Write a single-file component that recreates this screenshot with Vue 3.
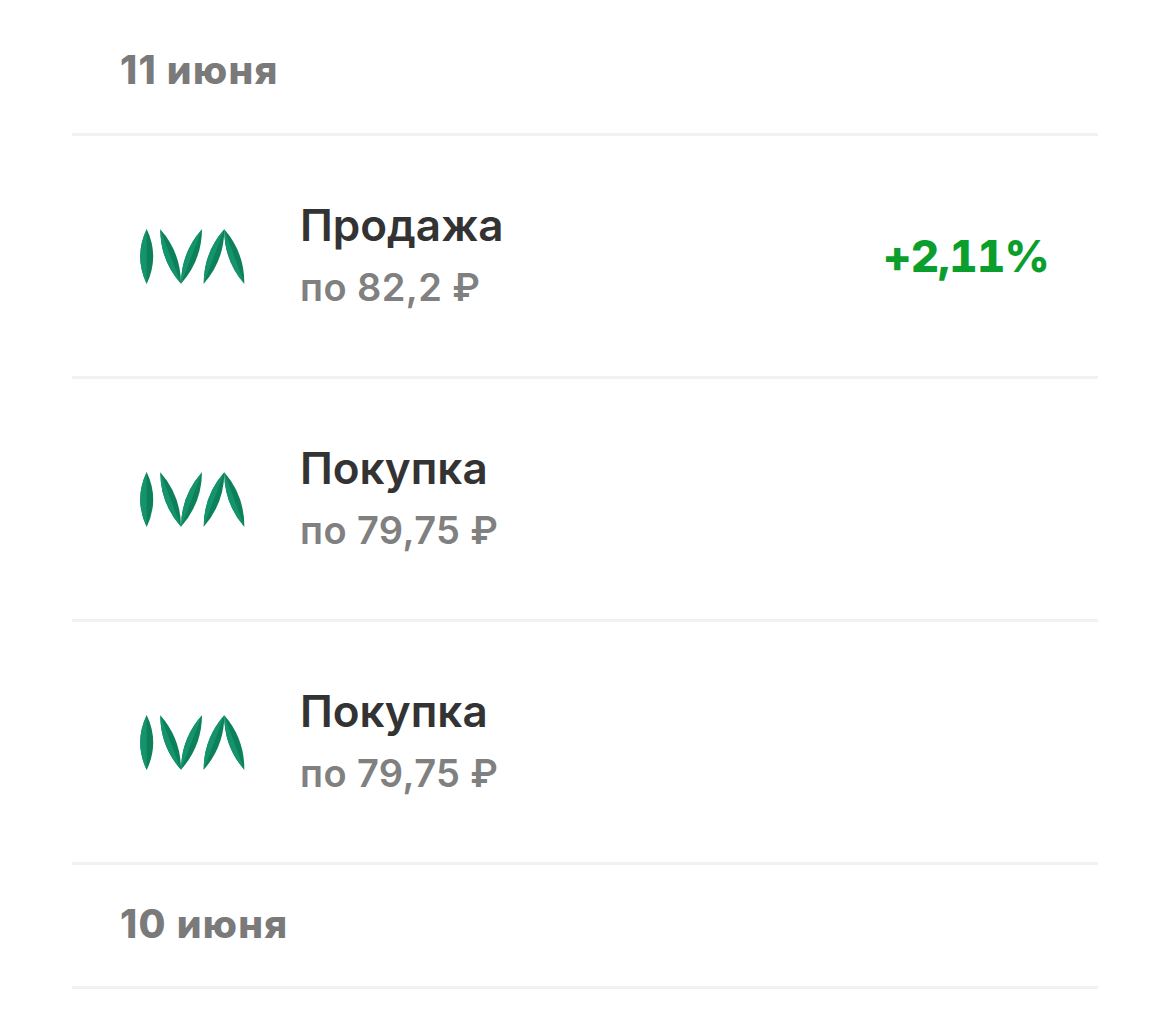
<template>
  <div class="page">
    <template v-for="group in groups" :key="group.date">
      <div class="date">{{ group.date }}</div>
      <div v-for="(deal, i) in group.deals" :key="i" class="deal">
        <svg class="logo" viewBox="0 0 108 58" width="108" height="58">
          <g fill="#0b8059">
            <path d="M8.700 2Q-4.300 29.500 8.700 57Q21.700 29.500 8.700 2Z" />
            <path d="M22.300 2.300Q22.300 33.400 43 56.700Q42.900 25.600 22.300 2.300Z" />
            <path d="M64 2.300Q43.200 25.600 43 56.700Q63.800 33.400 64 2.300Z" />
            <path d="M86.300 2.300Q65.700 25.600 65.700 56.700Q86.300 33.400 86.300 2.300Z" />
            <path d="M86.300 2.300Q86 33.400 106.300 56.700Q106.600 25.600 86.300 2.300Z" />
          </g>
          <g fill="#14936c">
            <path d="M8.700 2Q-4.300 29.500 8.700 57Z" />
            <path d="M22.300 2.300Q22.300 33.400 43 56.700Z" />
            <path d="M64 2.300Q43.200 25.600 43 56.700Z" />
            <path d="M86.300 2.300Q65.700 25.600 65.700 56.700Z" />
            <path d="M86.300 2.300Q86 33.400 106.300 56.700Z" />
          </g>
        </svg>
        <div class="info">
          <div class="title">{{ deal.title }}</div>
          <div class="price">{{ deal.price }}</div>
        </div>
        <div v-if="deal.profit" class="profit">{{ deal.profit }}</div>
      </div>
    </template>
  </div>
</template>

<script setup>
const groups = [
  {
    date: '11 июня',
    deals: [
      { title: 'Продажа', price: 'по 82,2 ₽', profit: '+2,11%' },
      { title: 'Покупка', price: 'по 79,75 ₽' },
      { title: 'Покупка', price: 'по 79,75 ₽' },
    ],
  },
  { date: '10 июня', deals: [] },
];
</script>

<style>
body {
  background: #fff;
}
</style>

<style scoped>
.page {
  width: 1026px;
  margin-left: 72px;
  height: 1025px;
  font-family: Inter, "Liberation Sans", sans-serif;
}
.date {
  height: 124px;
  box-sizing: border-box;
  padding-left: 48px;
  padding-bottom: 4px;
  display: flex;
  align-items: center;
  font-size: 39px;
  font-weight: 800;
  letter-spacing: 1.3px;
  color: #7a7a7a;
  border-bottom: 3px solid #f0f1f4;
}
.date:first-child {
  height: 136px;
  padding-bottom: 0;
  padding-top: 6px;
}
.deal {
  height: 243px;
  box-sizing: border-box;
  display: flex;
  align-items: center;
  padding: 0 49px 0 66px;
  border-bottom: 3px solid #f0f1f4;
}
.logo {
  flex: none;
  margin-right: 54px;
  margin-top: -1px;
}
.info {
  flex: 1;
}
.title {
  font-size: 44px;
  line-height: 62px;
  font-weight: 600;
  color: #333;
}
.price {
  font-size: 38px;
  line-height: 62px;
  font-weight: 600;
  letter-spacing: 0.4px;
  color: #808080;
}
.profit {
  font-size: 44px;
  font-weight: 800;
  font-feature-settings: "tnum";
  letter-spacing: -0.8px;
  color: #0a9f2d;
}
</style>
